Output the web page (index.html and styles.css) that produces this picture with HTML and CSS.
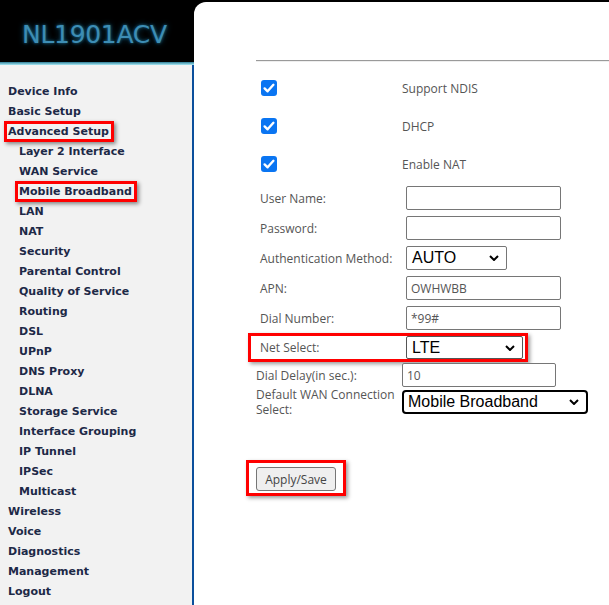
FILE: index.html
```html
<!DOCTYPE html>
<html>
<head>
<meta charset="utf-8">
<title>Mobile Broadband</title>
<link rel="stylesheet" href="styles.css">
</head>
<body>
<div class="page">
  <aside class="side">
    <div class="logo"><span class="logo-text">NL1901ACV</span></div>
    <div class="logo-line"></div>
    <nav class="nav">
      <a class="item top">Device Info</a>
      <a class="item top">Basic Setup</a>
      <a class="item top"><span class="hl">Advanced Setup</span></a>
      <a class="item sub">Layer 2 Interface</a>
      <a class="item sub">WAN Service</a>
      <a class="item sub"><span class="hl">Mobile Broadband</span></a>
      <a class="item sub">LAN</a>
      <a class="item sub">NAT</a>
      <a class="item sub">Security</a>
      <a class="item sub">Parental Control</a>
      <a class="item sub">Quality of Service</a>
      <a class="item sub">Routing</a>
      <a class="item sub">DSL</a>
      <a class="item sub">UPnP</a>
      <a class="item sub">DNS Proxy</a>
      <a class="item sub">DLNA</a>
      <a class="item sub">Storage Service</a>
      <a class="item sub">Interface Grouping</a>
      <a class="item sub">IP Tunnel</a>
      <a class="item sub">IPSec</a>
      <a class="item sub">Multicast</a>
      <a class="item top">Wireless</a>
      <a class="item top">Voice</a>
      <a class="item top">Diagnostics</a>
      <a class="item top">Management</a>
      <a class="item top">Logout</a>
    </nav>
  </aside>
  <main class="main">
    <hr class="rule">
    <div class="checks">
      <div class="crow">
        <span class="cb"><svg viewBox="0 0 16 16" width="16" height="16"><rect x="0" y="0" width="16" height="16" rx="3" fill="#0a75f2"/><path d="M3.6 8.4 L6.6 11.3 L12.4 4.8" fill="none" stroke="#fff" stroke-width="2.4" stroke-linecap="round" stroke-linejoin="round"/></svg></span>
        <span class="clabel">Support NDIS</span>
      </div>
      <div class="crow">
        <span class="cb"><svg viewBox="0 0 16 16" width="16" height="16"><rect x="0" y="0" width="16" height="16" rx="3" fill="#0a75f2"/><path d="M3.6 8.4 L6.6 11.3 L12.4 4.8" fill="none" stroke="#fff" stroke-width="2.4" stroke-linecap="round" stroke-linejoin="round"/></svg></span>
        <span class="clabel">DHCP</span>
      </div>
      <div class="crow">
        <span class="cb"><svg viewBox="0 0 16 16" width="16" height="16"><rect x="0" y="0" width="16" height="16" rx="3" fill="#0a75f2"/><path d="M3.6 8.4 L6.6 11.3 L12.4 4.8" fill="none" stroke="#fff" stroke-width="2.4" stroke-linecap="round" stroke-linejoin="round"/></svg></span>
        <span class="clabel">Enable NAT</span>
      </div>
    </div>
    <div class="fields">
      <div class="frow"><span class="flabel">User Name:</span><span class="input"></span></div>
      <div class="frow"><span class="flabel">Password:</span><span class="input"></span></div>
      <div class="frow"><span class="flabel">Authentication Method:</span>
        <span class="select sel-auth"><span class="sel-text">AUTO</span><svg class="chev" viewBox="0 0 10 6" width="10" height="6"><path d="M1 1 L5 5 L9 1" fill="none" stroke="#000" stroke-width="2"/></svg></span>
      </div>
      <div class="frow"><span class="flabel">APN:</span><span class="input">OWHWBB</span></div>
      <div class="frow"><span class="flabel">Dial Number:</span><span class="input">*99#</span></div>
    </div>
    <div class="net-row">
      <span class="flabel">Net Select:</span>
      <span class="select sel-net"><span class="sel-text">LTE</span><svg class="chev" viewBox="0 0 10 6" width="10" height="6"><path d="M1 1 L5 5 L9 1" fill="none" stroke="#000" stroke-width="2"/></svg></span>
    </div>
    <div class="fields2">
      <span class="flabel">Dial Delay(in sec.):</span><span class="input input-delay">10</span>
      <span class="flabel wrap">Default WAN Connection Select:</span>
      <span class="select sel-wan"><span class="sel-text">Mobile Broadband</span><svg class="chev" viewBox="0 0 10 6" width="10" height="6"><path d="M1 1 L5 5 L9 1" fill="none" stroke="#000" stroke-width="2"/></svg></span>
    </div>
    <div class="apply-wrap"><button class="btn">Apply/Save</button></div>
  </main>
</div>
</body>
</html>
```
FILE: styles.css
```css
html, body {
  margin: 0;
  padding: 0;
  background: #000;
}
.page {
  display: grid;
  grid-template-columns: 194px 1fr;
  width: 609px;
  height: 605px;
  overflow: hidden;
  background: #000;
}
.side {
  display: flex;
  flex-direction: column;
  height: 605px;
}
.logo {
  height: 62px;
  background: #000;
  display: flex;
  align-items: center;
  padding-left: 22px;
}
.logo-text {
  font-family: "DejaVu Sans", Verdana, sans-serif;
  font-size: 25px;
  letter-spacing: -0.3px;
  color: #3d8db4;
  text-shadow: 0 0 3px #1b6d92, 0 0 6px #0f4a66;
  margin-top: 6px;
}
.logo-line {
  height: 3px;
  background: linear-gradient(#2f7d95, #a9eaf6);
}
.nav {
  flex: 1;
  background: #f2f2f2;
  border-right: 2px solid #0b4f9c;
  padding-top: 16px;
}
.item {
  display: flex;
  align-items: center;
  height: 20px;
  font-family: "DejaVu Sans", Verdana, sans-serif;
  font-weight: bold;
  font-size: 11px;
  color: #1d2947;
  white-space: nowrap;
}
.item.top { padding-left: 8px; }
.item.sub { padding-left: 19px; }
.hl {
  display: inline-block;
  line-height: 15px;
  margin-left: -4px;
  padding: 0 2px 0 1px;
  border: 3px solid #f00;
  box-shadow: 2px 2px 4px rgba(0,0,0,0.45);
}
.main {
  background: #fff;
  margin-top: 2px;
  border-top-left-radius: 12px;
  padding: 58px 0 0 62px;
  font-family: "Open Sans", "Noto Sans", sans-serif;
  font-size: 12px;
  color: #555;
}
.rule {
  margin: 0;
  height: 0;
  border: 0;
  border-top: 1px solid #9a9a9a;
  border-bottom: 1px solid #eee;
}
.checks {
  margin-top: 7px;
}
.crow {
  display: grid;
  grid-template-columns: 146px auto;
  align-items: center;
  height: 38px;
}
.cb {
  display: block;
  width: 16px;
  height: 16px;
  margin-left: 5px;
}
.cb svg { display: block; }
.fields {
  padding-left: 4px;
}
.frow {
  display: grid;
  grid-template-columns: 146px auto;
  align-items: center;
  height: 30px;
}
.input {
  box-sizing: border-box;
  display: flex;
  align-items: center;
  width: 155px;
  height: 24px;
  border: 1px solid #767676;
  border-radius: 2px;
  padding-left: 4px;
  color: #555;
  background: #fff;
}
.select {
  box-sizing: border-box;
  display: flex;
  align-items: center;
  justify-content: space-between;
  height: 24px;
  border: 1px solid #767676;
  border-radius: 2px;
  padding: 0 7px 0 5px;
  font-family: "Liberation Sans", Arial, sans-serif;
  font-size: 16px;
  color: #000;
  background: #fff;
}
.chev { display: block; }
.sel-auth { width: 101px; }
.net-row {
  box-sizing: border-box;
  display: flex;
  align-items: center;
  width: 280px;
  height: 29px;
  margin-left: -8px;
  padding-left: 9px;
  border: 3px solid #f00;
  box-shadow: 2px 2px 4px rgba(0,0,0,0.4);
}
.net-row .flabel { width: 146px; flex: none; }
.sel-net {
  width: 117px;
  height: 23px;
  border-color: #555;
}
.fields2 {
  display: grid;
  grid-template-columns: 146px auto;
  align-items: center;
  row-gap: 0;
  margin-top: 1px;
}
.input-delay { width: 154px; }
.wrap {
  line-height: 15px;
  padding-right: 6px;
}
.sel-wan {
  width: 186px;
  height: 24px;
  border: 2px solid #000;
  border-radius: 4px;
  padding-left: 4px;
}
.apply-wrap {
  box-sizing: border-box;
  display: flex;
  width: 100px;
  height: 36px;
  margin: 43px 0 0 -10px;
  padding: 4px 0 0 7px;
  border: 3px solid #f00;
  box-shadow: 2px 2px 4px rgba(0,0,0,0.4);
}
.btn {
  box-sizing: border-box;
  width: 80px;
  height: 24px;
  background: #efefef;
  border: 1px solid #767676;
  border-radius: 3px;
  font-family: "Open Sans", "Noto Sans", sans-serif;
  font-size: 12px;
  color: #444;
  padding: 0;
}
```
